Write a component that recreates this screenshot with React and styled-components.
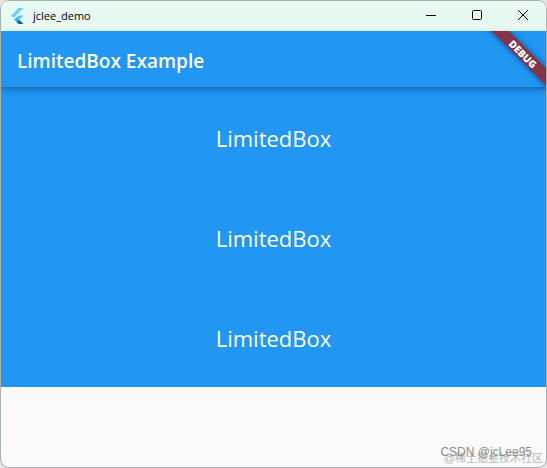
import React from 'react';
import styled, { createGlobalStyle } from 'styled-components';

const GlobalStyle = createGlobalStyle`
  * { box-sizing: border-box; }
  body {
    margin: 0;
    background-color: #e4e4e4;
    font-family: "Open Sans", "Noto Sans", "Noto Sans CJK SC", sans-serif;
  }
`;
const Window = styled.div`
  position: relative;
  display: flex;
  flex-direction: column;
  min-height: 100vh;
  border: 1px solid #a9b0b0;
  border-radius: 9px;
  overflow: hidden;
  background-color: #fafafa;
`;
const TitleBar = styled.header`
  display: flex;
  align-items: center;
  height: 30px;
  padding-left: 8px;
  background-color: #e8f9f2;
`;
const WindowTitle = styled.span`
  flex: 1;
  margin-left: 8px;
  font-size: 11px;
  line-height: 16px;
  color: #000;
`;
const WindowButton = styled.button`
  display: flex;
  align-items: center;
  justify-content: center;
  width: 46px;
  height: 30px;
  padding: 0 0 2px;
  border: none;
  background: none;
  color: #000;
`;
const Content = styled.main`
  position: relative;
  flex: 1;
`;
const AppBar = styled.div`
  position: relative;
  display: flex;
  align-items: center;
  height: 56px;
  padding: 4px 16px 0;
  background-color: #2196f3;
  box-shadow: 0 2px 4px -1px rgba(0, 0, 0, .2), 0 4px 5px rgba(0, 0, 0, .1), 0 1px 8px rgba(0, 0, 0, .08);
`;
const Heading = styled.h1`
  margin: 0;
  font-size: 19px;
  line-height: 28px;
  font-weight: 600;
  color: #fff;
`;
const List = styled.ul`
  margin: 0;
  padding: 0;
  list-style: none;
`;
const LimitedBox = styled.li`
  display: flex;
  align-items: center;
  justify-content: center;
  height: 100px;
  padding-top: 2px;
  background-color: #2196f3;
  color: #fff;
  font-size: 22px;
  line-height: 32px;
`;
const BannerCorner = styled.div`
  position: absolute;
  top: 0;
  right: 0;
  width: 80px;
  height: 80px;
  overflow: hidden;
  pointer-events: none;
`;
const Banner = styled.div`
  position: absolute;
  top: 17px;
  right: -37px;
  width: 120px;
  height: 12px;
  transform: rotate(45deg);
  background-color: #83344b;
  box-shadow: 0 0 6px rgba(0, 0, 0, .5);
  color: #fff;
  font-size: 10px;
  line-height: 12px;
  font-weight: 800;
  text-align: center;
`;
const Watermark = styled.span`
  position: absolute;
  right: ${props => props.$right}px;
  bottom: ${props => props.$bottom}px;
  font-family: "Liberation Sans", "Noto Sans CJK SC", sans-serif;
  font-size: ${props => props.$size}px;
  line-height: 16px;
  color: ${props => props.$color};
`;

const FlutterLogo = () => (
  <svg width="16" height="16" viewBox="0 0 16 16" aria-hidden="true">
    <path d="M9.5 0H14.6L4.6 10L2 7.5Z" fill="#6dd0f7" />
    <path d="M9.5 7.4H14.6L10.2 11.7L7.7 9.2Z" fill="#54c5f8" />
    <path d="M5.2 11.7L7.7 9.2L10.2 11.7L7.7 14.2Z" fill="#35aee6" />
    <path d="M7.7 14.2L10.2 11.7L14.6 16H9.5Z" fill="#126095" />
  </svg>
);

const controls = [
  { label: 'Minimize', shape: <path d="M0 5.5H10" /> },
  { label: 'Maximize', shape: <rect x="0.5" y="0.5" width="9" height="9" rx="1" /> },
  { label: 'Close', shape: <path d="M0 0L10 10M10 0L0 10" /> },
];

const items = ['LimitedBox', 'LimitedBox', 'LimitedBox'];

const App = () => (
  <>
    <GlobalStyle />
    <Window>
      <TitleBar>
        <FlutterLogo />
        <WindowTitle>jclee_demo</WindowTitle>
        {controls.map(item =>
          <WindowButton key={item.label} type="button" aria-label={item.label}>
            <svg width="10" height="10" viewBox="0 0 10 10" fill="none" stroke="currentColor" overflow="visible">
              {item.shape}
            </svg>
          </WindowButton>
        )}
      </TitleBar>
      <Content>
        <AppBar>
          <Heading>LimitedBox Example</Heading>
        </AppBar>
        <List>
          {items.map((text, i) => <LimitedBox key={i}>{text}</LimitedBox>)}
        </List>
        <BannerCorner>
          <Banner>DEBUG</Banner>
        </BannerCorner>
      </Content>
      <Watermark $right={3} $bottom={1} $size={11} $color="#b8b8b8">@稀土掘金技术社区</Watermark>
      <Watermark $right={14} $bottom={7} $size={12} $color="#8c8c8c">CSDN @jcLee95</Watermark>
    </Window>
  </>
);

export default App;
